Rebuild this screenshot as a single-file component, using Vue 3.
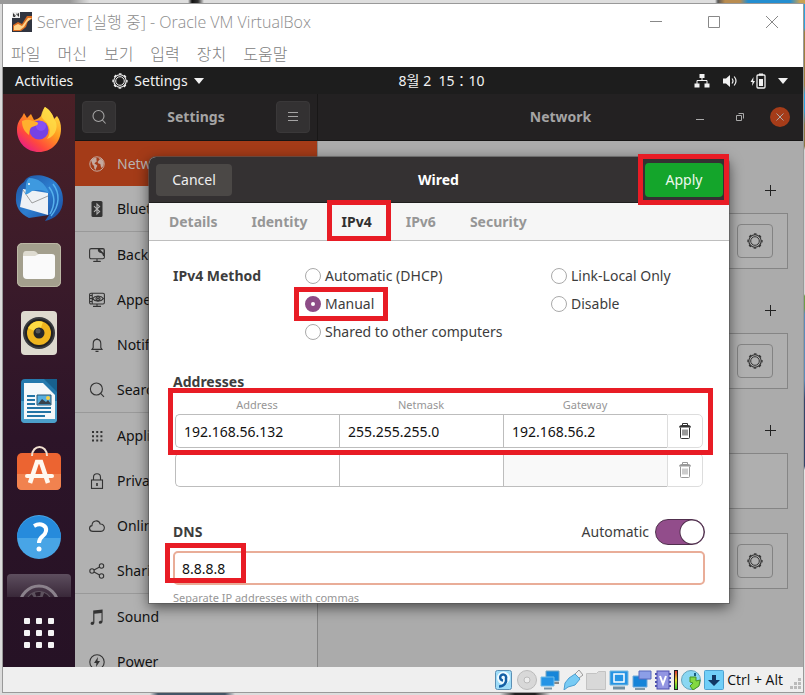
<script setup>
import { ref } from 'vue'

const gear =
  '<circle cx="8" cy="8" r="6.2" fill="none" stroke="currentColor" stroke-width="1.1"/>' +
  '<circle cx="8" cy="8" r="4.3" fill="none" stroke="currentColor" stroke-width="1"/>' +
  '<circle cx="8" cy="8" r="7" fill="none" stroke="currentColor" stroke-width="1.300" stroke-dasharray="2.700 2.800" stroke-dashoffset="1.350"/>'

const line = (body) =>
  `<g fill="none" stroke="currentColor" stroke-width="1.1">${body}</g>`

const sections = [
  { name: 'Network', active: true, icon: '<circle cx="8" cy="8" r="7.2" fill="none" stroke="currentColor"/><path fill="currentColor" d="M2 4.5 4 2.6l2.2-.8 1.6.8-.6 1.6 1 .9-1.8 1.3-1 1.4 1.8.6 1.2 1.4-1 1.8-.9 2.5-1.3-1.9-.1-2.2-1.6-1.4-.4-1.7zM9.6 2l2.6.7 2 2.4.6 2.4-.9 2.9-1.6 1.6-.7-2.5-.3-1.6-1.9-.3-.8-1.7 1.5-1.8 1.5-.4-1.5-.5z"/>' },
  { name: 'Bluetooth', end: true, icon: '<rect x="2.5" width="11" height="16" rx="1.5" fill="currentColor"/><path d="M5 5.2 10.6 10.6 8 13V3l2.6 2.4L5 10.8" fill="none" stroke="#b1b1b1" stroke-width="1.1"/>' },
  { name: 'Background', icon: line('<rect x=".6" y="1.6" width="14.8" height="10.2" rx="1.6"/><path d="M8 12v2.4M4.5 14.5h7"/>') + '<path d="M9 1.600q-1 4 3 4.400 1.500 0 2 3h1V2z" fill="currentColor"/><path d="m11 2.500 3.500 3.500V2.500z" fill="#b1b1b1"/><path d="M4.5 13.8h7V15h-7z" fill="currentColor"/>' },
  { name: 'Appearance', icon: line('<rect x=".6" y="1.2" width="14.8" height="10.8" rx="1.4"/><path d="M3.2 1.2V12M3.6 6.6c2.4-3.4 8.4-3.4 10.8 0-2.4 3.4-8.4 3.4-10.8 0zM8 12v2.6"/><circle cx="9" cy="6.6" r="2"/>') + '<circle cx="9" cy="6.6" r="1" fill="currentColor"/><path d="M4 13.8h8V15H4zM1 3h2v1H1zm0 3h2v1H1zm0 3h2v1H1z" fill="currentColor"/>' },
  { name: 'Notifications', icon: line('<path d="M3 12.4h10l-1.2-1.8V6.8C11.800 4 10.200 2.400 8 2.400S4.200 4 4.200 6.800v3.800zM6.500 14.400h3M8 1v1.500"/>') },
  { name: 'Search', end: true, icon: line('<circle cx="7.400" cy="7" r="6"/><path d="m11.600 11.400 3.400 3.400"/>') },
  { name: 'Applications', icon: '<path fill="currentColor" d="M3 3h2v2H3zm4.200 0h2v2h-2zm4.200 0h2v2h-2zM3 7.200h2v2H3zm4.200 0h2v2h-2zm4.200 0h2v2h-2zM3 11.400h2v2H3zm4.200 0h2v2h-2zm4.200 0h2v2h-2z"/>' },
  { name: 'Privacy', icon: line('<rect x="2.500" y="7" width="11" height="8.400"/><path d="M4.500 7V4.400C4.500-.4 11.500-.4 11.500 4.400V7"/>') + '<path d="M7.200 10h1.600v3H7.200z" fill="currentColor"/>' },
  { name: 'Online Accounts', icon: line('<path d="M4 13.400C-.400 13.400-.400 8 3 7.600 3 2 10 1.400 11.200 6c5.400-.3 5.400 7.400.8 7.400z"/>') },
  { name: 'Sharing', end: true, icon: line('<circle cx="3" cy="8" r="2.200"/><circle cx="12.500" cy="3" r="2.200"/><circle cx="12.500" cy="13" r="2.200"/><path d="m5 7 5.600-3M5 9l5.600 3"/>') },
  { name: 'Sound', icon: '<path fill="currentColor" d="M4.200 1.500 13.600.5v11.700c0 3-3.800 3.200-3.800 1.200 0-1.600 1.800-2 2.700-1.600V4L5.400 4.800v8.600c0 3-3.800 3.200-3.800 1.200 0-1.600 1.800-2 2.600-1.600z"/>' },
  { name: 'Power', icon: line('<circle cx="8" cy="8" r="7.2"/>') + '<path fill="currentColor" d="M9 3 5 9h2.400L7 13l4-6H8.500z"/>' },
]

const cards = [
  { add: true, gear: true },
  { add: true, gear: true },
  { add: true, gear: false },
  { add: false, gear: true },
]

const tabs = ['Details', 'Identity', 'IPv4', 'IPv6', 'Security']
const tab = ref('IPv4')
const methods = ['Automatic (DHCP)', 'Link-Local Only', 'Manual', 'Disable', 'Shared to other computers']
const method = ref('Manual')
const rows = ref([
  { address: '192.168.56.132', netmask: '255.255.255.0', gateway: '192.168.56.2' },
  { address: '', netmask: '', gateway: '' },
])
const dns = ref('8.8.8.8')
const autoDns = ref(true)
</script>

<template>
  <div class="desktop">
    <div class="vm">
      <header class="titlebar">
        <svg class="vm-icon" viewBox="0 0 20 20"><rect width="20" height="20" fill="#30343f" /><path d="M1 19v-6l5-3 4 2 5-8h5v3l-4 2-2 6-5 4z" fill="#d96a20" /><path d="M2 18v-4l4-2 4 2 6-8h4l-5 4-3 5-4 3z" fill="#ffd389" /><rect width="8" height="6" fill="#eee" /><path d="M1.500 1.500v3h1.500V3H1.500M5 1.500V3h1.500V1.500v3" stroke="#333" fill="none" /></svg>
        <h1>Server [실행 중] - Oracle VM VirtualBox</h1>
        <div class="win-buttons">
          <button aria-label="Minimize"><svg viewBox="0 0 12 12"><path d="M0 5.500h12" /></svg></button>
          <button aria-label="Maximize"><svg viewBox="0 0 12 12"><path d="M.500.500h11v11H.500z" /></svg></button>
          <button aria-label="Close"><svg viewBox="0 0 12 12"><path d="m0 0 12 12M12 0 0 12" /></svg></button>
        </div>
      </header>
      <nav class="menubar">
        <a v-for="m in ['파일', '머신', '보기', '입력', '장치', '도움말']" :key="m" href="#">{{ m }}</a>
      </nav>

      <div class="topbar">
        <button class="activities">Activities</button>
        <button class="appmenu">
          <svg class="i16" viewBox="0 0 16 16" v-html="gear"></svg>
          <span>Settings</span>
          <svg class="caret" viewBox="0 0 10 6"><path d="M0 0h10L5 6z" /></svg>
        </button>
        <time class="clock">8월 2&nbsp; 15：10</time>
        <div class="tray">
          <svg class="i16" viewBox="0 0 16 16"><path fill="currentColor" d="M5.500 1h5v4h-5zM.500 10.500h5v4h-5zM10.500 10.500h5v4h-5z" /><path d="M8 4v4M3 11V7.500h10V11" fill="none" stroke="currentColor" /></svg>
          <svg class="i16" viewBox="0 0 16 16"><path fill="currentColor" d="M1 5.500h3L8 2v12l-4-3.500H1z" /><path d="M10 5.500q2 2.500 0 5M12.200 3.500q3.600 4.500 0 9" fill="none" stroke="currentColor" stroke-width="1.200" /></svg>
          <svg class="i16" viewBox="0 0 16 16"><path fill="currentColor" d="M3.500 4 .500 9h2L2 13l3-5H3.200zM9 .500h4v2H9zM9 6h4v7H9z" /><rect x="7" y="2" width="8" height="13" rx="1" fill="none" stroke="currentColor" stroke-width="1.300" /></svg>
          <svg class="caret" viewBox="0 0 10 6"><path d="M0 0h10L5 6z" /></svg>
        </div>
      </div>

      <div class="guest">
        <aside class="dock">
          <svg viewBox="0 0 44 44">
            <defs>
              <linearGradient id="ff" x1="1" y1="0" x2=".2" y2="1"><stop offset="0" stop-color="#fff44f" /><stop offset=".45" stop-color="#ff9a1f" /><stop offset=".75" stop-color="#ff4a3c" /><stop offset="1" stop-color="#e5178f" /></linearGradient>
              <linearGradient id="tb" x1="0" y1="0" x2="1" y2="1"><stop offset="0" stop-color="#1c4f9c" /><stop offset=".5" stop-color="#2d7ed0" /><stop offset="1" stop-color="#17489b" /></linearGradient>
            </defs>
            <path fill="url(#ff)" d="M28 0c5 3 8 8 9 12l3-3c3 4 4 8 4 13 0 14-10 23-22 23S0 36 0 23C0 16 3 12 5 10l2-4 3 5 4-4 3 6c10-2 8-10 11-13z" />
            <circle cx="22" cy="23" r="9.500" fill="#7542e5" /><circle cx="24" cy="19" r="5" fill="#9059ff" opacity=".6" />
            <path fill="#ffb02e" d="M5 14c7-3 10 0 15 1 3 2-1 4-5 5-2 1-3 4-3 8-5-4-7-8-7-14z" />
            <path fill="#ffe04a" d="M28 0c-4 6-5 9-1 13 7 6 7 14 3 19 10-3 12-15 7-20-1-4-4-9-9-12z" opacity=".75" />
          </svg>
          <svg viewBox="0 0 44 44">
            <path fill="url(#tb)" d="M14 1c12-3 32 3 32 24 0 12-8 19-18 21l4-6-20 3C3 39-2 31-1 22c0-7 3-12 8-15 1-3 4-5 7-6z" />
            <path fill="#eef1f5" d="m6 14 25 4v22L3 32z" />
            <path d="m6 15 9 13 16-7" fill="none" stroke="#888" stroke-width=".8" />
            <path fill="#3e99df" d="M12 3c9 0 16 5 20 15-5-3-11-4-17-2-3 2-5 4-7 3 2-4-1-12 4-16z" /><path d="M36 9c7 9 7 21-2 32M32 12c6 8 6 18 1 27" fill="none" stroke="#56b1ec" stroke-width="1.500" />
            <circle cx="12" cy="9" r="1" fill="#fff" />
          </svg>
          <svg viewBox="0 0 44 44"><rect width="44" height="44" rx="5" fill="#a39f8d" /><rect x=".5" y=".5" width="43" height="43" rx="5" fill="none" stroke="#bcb8a5" /><path fill="#dedbd0" d="M6 12q0-4 3-4h8q2 0 4 3h13v6H6z" /><path fill="#fafafa" d="M6 13h12l4-2h13q3 0 3 3v18q0 4-4 4H10q-4 0-4-4z" /></svg>
          <svg viewBox="0 0 44 44"><rect x="4" width="36" height="44" rx="4" fill="#dedacf" /><circle cx="22" cy="22" r="16" fill="#393b3f" /><circle cx="22" cy="22" r="14" fill="#222" /><circle cx="22" cy="22" r="12" fill="#efb51e" /><path d="m22 22-11-5a12 12 0 0 1 15-6z" fill="#ffdc43" /><circle cx="22" cy="22" r="5.500" fill="#25272b" /><circle cx="21" cy="20" r="2.500" fill="#555" /></svg>
          <svg viewBox="0 0 44 44"><rect x="4" width="36" height="44" rx="4" fill="#2579ad" /><path d="M4 22h36v18q0 4-4 4H8q-4 0-4-4z" fill="#4c9fca" /><path d="M7 4h19l12 12v24H7z" fill="#f5f8fa" /><path d="M27 0h13v13z" fill="#17608e" /><path d="M10 17h8M10 21h8M10 25h8M10 29h24M10 33h24M10 37h18" stroke="#2374a5" stroke-width="2" /><path d="M20 16h14v10H20z" fill="#56aede" stroke="#285977" /><path d="m21 25 4-5 4 3 2-2 3 4z" fill="#38424b" /><circle cx="31" cy="19" r="2" fill="#f6cf43" /></svg>
          <svg viewBox="0 0 44 44"><rect y="6" width="44" height="37" rx="5" fill="#ec6431" /><path d="M0 27h44v11q0 5-5 5H5q-5 0-5-5z" fill="#f1824f" /><path d="m13 36 7-21h4l7 21" fill="none" stroke="#fff8ef" stroke-width="4.500" /><path d="M10 29h25" stroke="#fff8ef" stroke-width="4" stroke-linecap="round" /><path d="M15 9C15-3 30-3 30 9" fill="none" stroke="#f1dfcf" stroke-width="2" /></svg>
          <svg viewBox="0 0 44 44"><circle cx="22" cy="22" r="22" fill="#48a5e6" /><path d="M0 23a22 22 0 0 1 44 0z" fill="#268bdc" /><path d="M17 11c7-4 13 0 12 5-1 6-7 5-7 12" fill="none" stroke="#fff" stroke-width="4" /><circle cx="22" cy="34" r="2.500" fill="#fff" /></svg>
          <div class="peek"><svg viewBox="0 0 64 23"><circle cx="32" cy="31" r="19" fill="none" stroke="#8b828c" stroke-width="3" /><circle cx="32" cy="31" r="14" fill="#5d525e" /><circle cx="32" cy="31" r="11" fill="none" stroke="#2c1b2b" stroke-width="4" stroke-dasharray="5 3" /></svg></div>
          <button class="launcher" aria-label="Show applications"><i v-for="n in 9" :key="n"></i></button>
        </aside>

        <section class="settings">
          <header class="headerbar">
            <div class="head-left">
              <button class="hb" aria-label="Search"><svg class="i16" viewBox="0 0 16 16"><g fill="none" stroke="currentColor" stroke-width="1.100"><circle cx="7.500" cy="7" r="5.500" /><path d="m11.400 11 3.200 3.500" /></g></svg></button>
              <h2>Settings</h2>
              <button class="hb" aria-label="Menu"><svg class="i16" viewBox="0 0 16 16"><path d="M3 3.500h10M3 7.500h10M3 11.500h10" stroke="currentColor" /></svg></button>
            </div>
            <div class="head-right">
              <h2>Network</h2>
              <div class="controls">
                <button aria-label="Minimize"><svg viewBox="0 0 20 20"><path d="M6 12.500h8" /></svg></button>
                <button aria-label="Restore"><svg viewBox="0 0 20 20"><path d="M6.500 8.500h5v5h-5zM8.500 6.500h5v5" /></svg></button>
                <button class="close" aria-label="Close"><svg viewBox="0 0 20 20"><path d="m6.500 6.500 7 7m0-7-7 7" /></svg></button>
              </div>
            </div>
          </header>

          <div class="columns">
            <nav class="sidebar">
              <a v-for="s in sections" :key="s.name" href="#" :class="{ active: s.active, end: s.end }">
                <svg class="i16" viewBox="0 0 16 16" v-html="s.icon"></svg>
                <span>{{ s.name }}</span>
              </a>
            </nav>
            <main class="panel">
              <div v-for="(c, i) in cards" :key="i" class="group">
                <button v-if="c.add" class="add" aria-label="Add"><svg viewBox="0 0 11 11"><path d="M0 5.500h11M5.500 0v11" /></svg></button>
                <div class="card">
                  <button v-if="c.gear" class="cog" aria-label="Options"><svg class="i16" viewBox="0 0 16 16" v-html="gear"></svg></button>
                </div>
              </div>
            </main>
          </div>

          <form class="dialog" @submit.prevent>
            <header>
              <button type="button" class="cancel">Cancel</button>
              <h2>Wired</h2>
              <button type="submit" class="apply marked">Apply</button>
            </header>
            <div class="tabs">
              <button v-for="t in tabs" :key="t" type="button" :class="{ on: tab === t, marked: tab === t }" @click="tab = t">{{ t }}</button>
            </div>
            <div class="body">
              <div class="methods">
                <h3>IPv4 Method</h3>
                <div class="radios">
                  <label v-for="m in methods" :key="m" :class="{ marked: m === 'Manual' }">
                    <input v-model="method" type="radio" name="method" :value="m" />{{ m }}
                  </label>
                </div>
              </div>

              <h3 class="addr-title">Addresses</h3>
              <div class="addresses">
                <div class="addr-row names">
                  <label for="address0">Address</label>
                  <label for="netmask0">Netmask</label>
                  <label for="gateway0">Gateway</label>
                </div>
                <div v-for="(r, i) in rows" :key="i" class="addr-row">
                  <input :id="'address' + i" v-model="r.address" type="text" aria-label="Address" />
                  <input :id="'netmask' + i" v-model="r.netmask" type="text" aria-label="Netmask" />
                  <input :id="'gateway' + i" v-model="r.gateway" type="text" aria-label="Gateway" :disabled="i > 0" />
                  <button type="button" aria-label="Delete" :disabled="i > 0">
                    <svg class="i16" viewBox="0 0 16 16"><path d="M5.500 2V.500h5V2" fill="none" stroke="currentColor" /><path d="M2 4.500q0-2.500 3-2.500h6q3 0 3 2.500z" fill="currentColor" /><path d="M3.500 4.500v10q0 1 1 1h7q1 0 1-1v-10M6 6.500v6M8 6.500v6M10 6.500v6" fill="none" stroke="currentColor" /></svg>
                  </button>
                </div>
              </div>

              <div class="dns-head">
                <h3><label for="dns">DNS</label></h3>
                <label class="auto">Automatic <input v-model="autoDns" type="checkbox" role="switch" /></label>
              </div>
              <div class="dns marked"><input id="dns" v-model="dns" type="text" /></div>
              <p class="hint">Separate IP addresses with commas</p>
            </div>
          </form>
        </section>
      </div>

      <footer class="statusbar">
        <svg viewBox="0 0 20 20"><rect x="1.500" y=".500" width="16" height="19" rx="2" fill="#9edcf8" stroke="#5b8fb4" /><circle cx="9.500" cy="8" r="6.500" fill="#eefaff" /><path d="M5 16.500c5 0 8-4 7-8a3 3 0 1 0-3 2" fill="none" stroke="#145fa5" stroke-width="2.500" /></svg>
        <svg viewBox="0 0 20 20"><circle cx="10" cy="10" r="9.500" fill="#d8d8d8" stroke="#bbb" /><circle cx="10" cy="10" r="3" fill="#eee" stroke="#bbb" /></svg>
        <svg viewBox="0 0 20 20"><path d="M6 1h13v10H6z" fill="#1686d9" stroke="#77a5c0" /><path d="M10 13h9" stroke="#888" stroke-width="2" /><path d="M1 7h13v9H1z" fill="#2494e5" stroke="#71bce8" /><path d="M4 18.500h8" stroke="#7896a8" stroke-width="2" /></svg>
        <svg viewBox="0 0 20 20"><path d="m12 4 4-4 4 5-4 3z" fill="#eee" stroke="#999" /><path d="m6 8 6-4 5 5-5 6-7 2-4 3 1-7z" fill="#78cbf4" stroke="#4d9ed0" /></svg>
        <svg viewBox="0 0 20 20"><path d="M.500 3.500h10l2-2h7v18H.500z" fill="#d8d8d8" stroke="#c3c3c3" /></svg>
        <svg viewBox="0 0 20 20"><path d="M1 1h18v14H1z" fill="#2594e4" stroke="#7bb9de" /><path d="M5 4h10v8H5z" fill="#2594e4" stroke="#fff" stroke-width="1.500" /><path d="M4 18h12" stroke="#718fa1" stroke-width="3" /></svg>
        <svg viewBox="0 0 20 20"><path d="M1 6h14v11H1z" fill="#1684d8" stroke="#70aada" /><path d="M7 1h12v8H7z" fill="#8c9ee7" stroke="#5868bc" /><path d="M3 19h10" stroke="#8199a7" stroke-width="2" /></svg>
        <svg class="chip" viewBox="0 0 16 20"><rect x="2" y="1" width="12" height="18" fill="#9295e2" stroke="#4e51af" /><path d="M1 3v15M15 3v15" stroke="#4e51af" stroke-width="2" stroke-dasharray="2 2" /><path d="m5 6 3 8 3-8" fill="none" stroke="#fff" stroke-width="2" /></svg>
        <i class="meter"></i>
        <svg viewBox="0 0 20 20"><circle cx="10" cy="10" r="9.500" fill="#8ad7f2" stroke="#64a4bd" /><path d="M9 7h6v4l4-1-1 6-6 4-3-4 3-3-3-1z" fill="#83d942" stroke="#469225" /><path d="M14 3v3" stroke="#175d80" stroke-width="2" /></svg>
        <svg viewBox="0 0 20 20"><rect x=".500" y=".500" width="19" height="19" rx="1" fill="#71cff8" stroke="#50a2d0" /><path fill="#123764" d="M8 5h4v5h4l-6 6-6-6h4z" /></svg>
        <span class="host-key">Ctrl + Alt</span>
        <svg class="grip" viewBox="0 0 11 11"><path fill="#bbb" d="M8 0h3v3H8zM4 4h3v3H4zm4 0h3v3H8zM0 8h3v3H0zm4 0h3v3H4zm4 0h3v3H8z" /></svg>
      </footer>
    </div>
  </div>
</template>

<style>
body { margin: 0; }
</style>

<style scoped>
* { box-sizing: border-box; }
button { border: 0; padding: 0; background: none; color: inherit; font: inherit; }
a { color: inherit; text-decoration: none; }
h1, h2, h3, p { margin: 0; }
svg { display: block; flex: none; }
.i16 { width: 16px; height: 16px; }

.desktop {
  height: 100vh;
  padding: 4px 2px 3px 3px;
  overflow: hidden;
  font: 14px/20px "Noto Sans", "Noto Sans CJK KR", sans-serif;
  background:
    linear-gradient(90deg, transparent 188px, #111 192px, #333 198px, transparent 204px) top / 100% 4px no-repeat,
    linear-gradient(90deg, #999 0 70px, #dedede 90px 715px, #555 718px, #b98c50 725px, #b98c50 740px, #248ed0 748px 790px, #c9a252 800px) top / 100% 4px no-repeat,
    linear-gradient(90deg, #ddd 150px, #456 158px 225px, #ddd 235px 500px, #222 515px 535px, #ddd 550px) bottom / 100% 3px no-repeat,
    linear-gradient(#2ba3dd 28px, #9e7f3e 32px 85px, #29a3dd 95px 110px, #8c7640 125px 146px, #d6d6d6 150px 294px, #6c9e48 296px 308px, #5b8bb9 314px 380px, #34436a 400px 466px, #e3e3e3 470px) right / 2px 100% no-repeat,
    #dcdcdc;
}
.vm {
  display: flex;
  flex-direction: column;
  height: 100%;
  background: #fff;
  outline: 1px solid #999;
}
.titlebar { display: flex; align-items: center; height: 36px; padding-left: 9px; gap: 5px; color: #8c8c8c; }
.vm-icon { width: 20px; height: 20px; }
.titlebar h1 { font: 300 16px/20px "Open Sans", "Noto Sans CJK KR", sans-serif; white-space: nowrap; }
.win-buttons { display: flex; gap: 46px; margin-left: auto; padding-right: 25px; }
.win-buttons svg { width: 12px; height: 12px; fill: none; stroke: #888; }
.menubar { display: flex; align-items: center; height: 25px; margin-bottom: 2px; gap: 17px; padding-left: 8px; font: 300 16px/20px "Noto Sans CJK KR", sans-serif; color: #808080; }

.topbar { display: flex; align-items: center; flex: none; height: 27px; padding: 0 15px 0 12px; background: #1d1d1d; color: #f2f2f2; }
.appmenu { display: flex; align-items: center; gap: 6px; margin-left: 39px; }
.caret { width: 10px; height: 6px; fill: currentColor; }
.clock { margin-left: 195px; white-space: pre; }
.tray { display: flex; align-items: center; gap: 12px; margin-left: auto; }

.guest { display: flex; flex: 1; min-height: 0; }
.dock {
  display: flex;
  flex-direction: column;
  align-items: center;
  gap: 24px;
  flex: none;
  width: 72px;
  padding-top: 13px;
  overflow: hidden;
  background: linear-gradient(#4b2026, #3b1b2a 30%, #2c1428 60%, #261225);
}
.dock > svg { width: 44px; height: 44px; overflow: visible; }
.peek { flex: none; width: 64px; height: 23px; margin-top: -9px; border-radius: 4px 4px 0 0; background: linear-gradient(#5d4e5e, #392839); overflow: hidden; }
.launcher { display: grid; grid-template-columns: repeat(3, 6px); gap: 6px; margin-top: -3px; }
.launcher i { width: 6px; height: 6px; border-radius: 1px; background: #f4f4f4; }

.settings { position: relative; display: flex; flex-direction: column; flex: 1; min-width: 0; }
.headerbar { display: flex; flex: none; height: 47px; background: #232122; border-bottom: 1px solid #151414; color: #a5a4a4; }
.headerbar h2 { flex: 1; font-size: 14px; line-height: 20px; text-align: center; }
.head-left { display: flex; align-items: center; width: 243px; padding: 0 7px; border-right: 1px solid #181717; }
.hb { display: grid; place-items: center; width: 34px; height: 32px; border-radius: 4px; background: #333132; border: 1px solid #3a3839; }
.head-right { position: relative; display: flex; flex: 1; align-items: center; }
.controls { position: absolute; right: 13px; display: flex; gap: 20px; }
.controls svg { width: 20px; height: 20px; fill: none; stroke: #aaa; }
.close { border-radius: 50%; background: #a53c19; }
.columns { display: flex; flex: 1; min-height: 0; }
.sidebar { width: 243px; flex: none; overflow: hidden; background: #b1b1b1; border-right: 1px solid #858585; color: #111; }
.sidebar a { display: flex; align-items: center; height: 45px; gap: 12px; padding-left: 14px; }
.sidebar svg { color: #333; }
.sidebar .end { box-sizing: content-box; border-bottom: 1px solid #999; }
.sidebar .active { background: #a43b18; color: #b9b4b1; }
.sidebar .active svg { color: #c4a89e; }
.panel { flex: 1; padding: 32px 15px 0; overflow: hidden; background: #ababab; }
.group { display: flex; flex-direction: column; align-items: flex-end; margin-bottom: 24px; }
.add { display: grid; place-items: center; width: 24px; height: 24px; margin: 5px 6px 11px; }
.add svg { width: 11px; height: 11px; stroke: #222; }
.card { display: flex; align-items: center; justify-content: flex-end; width: 100%; height: 56px; padding-right: 14px; background: #afafaf; border: 1px solid #858585; }
.cog { display: grid; place-items: center; width: 36px; height: 34px; border: 1px solid #838383; border-radius: 4px; color: #333; }

.dialog {
  position: absolute;
  inset: 63px 74px 64px;
  display: flex;
  flex-direction: column;
  border-radius: 7px 7px 0 0;
  background: #fff;
  color: #3d3d3d;
  box-shadow: 0 0 0 1px #5559, 0 4px 14px #0009;
}
.dialog header { display: flex; align-items: center; justify-content: space-between; height: 46px; padding: 0 6px 0 7px; border-radius: 7px 7px 0 0; background: #343132; border-bottom: 1px solid #1f1e1e; color: #fff; }
.dialog header h2 { font-size: 14px; line-height: 20px; }
.cancel { width: 76px; height: 32px; border-radius: 4px; background: #4b4846; color: #eee; }
.apply { width: 78px; height: 34px; border-radius: 4px; background: #14a52b; color: #eef8ee; }
.marked { position: relative; }
.marked::after { content: ""; position: absolute; z-index: 2; box-sizing: border-box; border: 5px solid #e81c25; pointer-events: none; }
.apply.marked::after { inset: -9px -6px -8px -7px; }
.tabs { display: flex; flex: none; height: 38px; gap: 2px; padding-left: 4px; background: #f6f6f6; border-bottom: 1px solid #bebebe; color: #969696; font-weight: 700; }
.tabs button { padding: 0 16px; }
.tabs .on { color: #303030; }
.tabs .marked::after { inset: -3px -3px -1px 1px; }
.body { flex: 1; min-height: 0; padding: 21px 24px 0; overflow: hidden; }
h3 { font-size: 14px; line-height: 20px; font-weight: 700; }
.methods { display: grid; grid-template-columns: 132px 1fr; line-height: 28px; }
.methods h3 { line-height: 28px; }
.radios { display: grid; grid-template-columns: 246px 1fr; justify-items: start; }
.radios label { display: flex; align-items: center; gap: 4px; height: 28px; white-space: nowrap; }
.radios input { appearance: none; width: 16px; height: 16px; margin: 0; border: 1px solid #aaa; border-radius: 50%; background: #fff; }
.radios input:checked { border: 6px solid #8d4c87; }
.radios .marked::after { inset: -3px -14px -3px -11px; }
.addr-title { margin-top: 26px; }
.addresses { position: relative; display: grid; gap: 5px; padding: 4px 2px 0; }
.addresses::after { content: ""; position: absolute; inset: -4px -8px 32px -5px; border: 5px solid #e81c25; pointer-events: none; }
.addr-row { display: grid; grid-template-columns: 1fr 1fr 1fr 36px; }
.names { height: 18px; margin-bottom: -5px; font-size: 11px; line-height: 18px; color: #969696; text-align: center; }
.addr-row input { width: 100%; min-width: 0; height: 34px; padding: 0 8px; border: 1px solid #bdbdbd; border-right: 0; font: inherit; color: #111; background: #fff; }
.addr-row input:first-child { border-radius: 5px 0 0 5px; }
.addr-row input:disabled { background: #f9f9f9; }
.addr-row button { display: grid; place-items: center; border: 1px solid #ddd; border-radius: 0 5px 5px 0; color: #333; }
.addr-row button:disabled { color: #999; }
.dns-head { display: flex; align-items: center; justify-content: space-between; height: 26px; margin-top: 32px; }
.auto { display: flex; align-items: center; gap: 6px; }
.auto input { appearance: none; width: 50px; height: 26px; margin: 0; border: 1px solid #51304e; border-radius: 13px; background: radial-gradient(circle at 36px 12px, #fff 11px, #51304e 12px, #924d8b 13px); }
.dns { margin-top: 6px; }
.dns input { display: block; width: 100%; height: 34px; padding: 0 7px; border: 2px solid #e9ad98; border-radius: 5px; outline: 0; font: inherit; color: #111; background: #fff; }
.dns.marked::after { inset: -8px auto 2px -8px; width: 81px; }
.hint { margin-top: 5px; font-size: 11px; line-height: 16px; color: #969696; }

.statusbar { display: flex; align-items: center; justify-content: flex-end; flex: none; height: 25px; gap: 3px; padding-right: 2px; background: #efefef; color: #111; }
.statusbar svg { width: 20px; height: 20px; }
.statusbar .chip { width: 16px; }
.meter { width: 4px; height: 20px; border: 1px solid #222; background: linear-gradient(#d33, #dd3, #3c3); }
.host-key { font: 14px/20px "Open Sans", sans-serif; }
.statusbar .grip { width: 11px; height: 11px; margin: 8px 0 0 4px; }
</style>
